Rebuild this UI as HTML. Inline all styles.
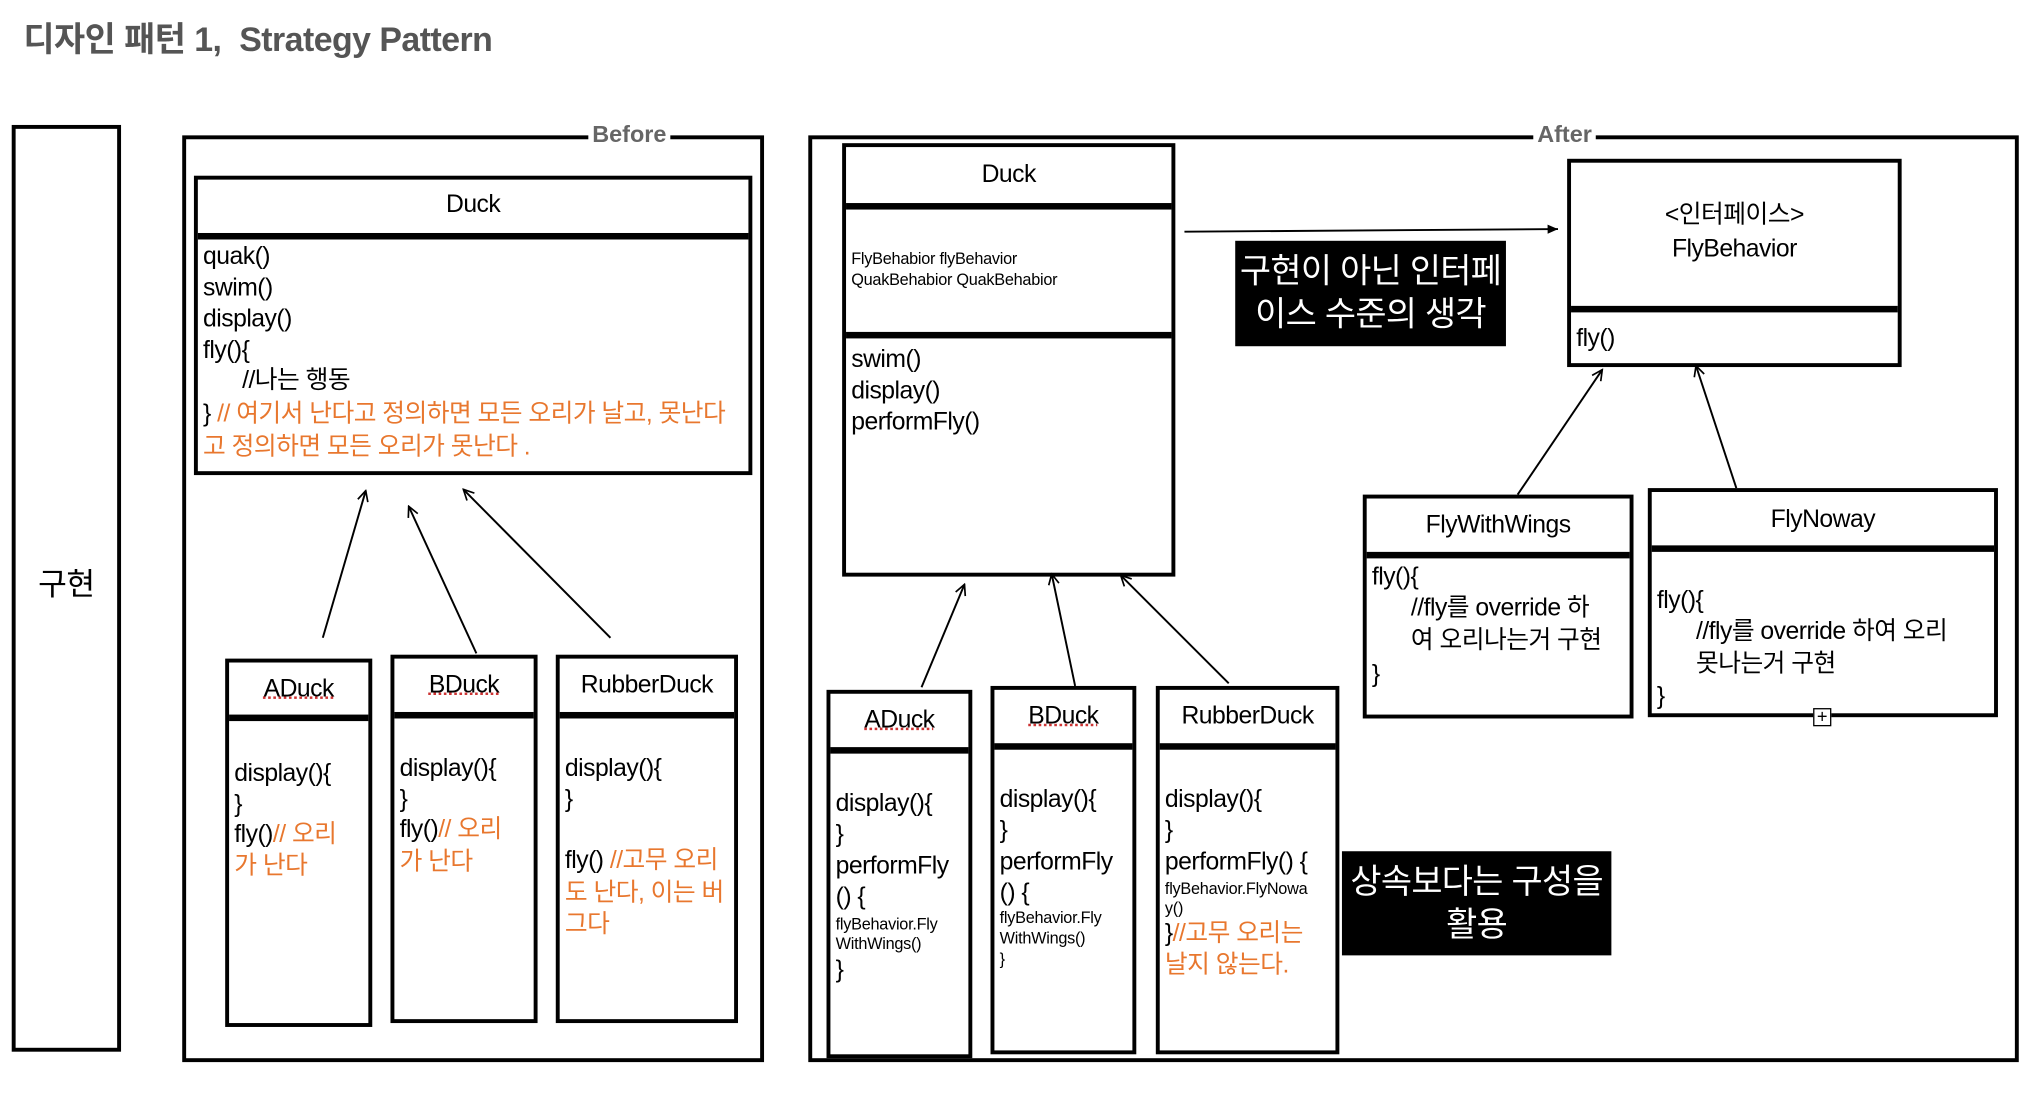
<!DOCTYPE html>
<html><head><meta charset="utf-8"><style>
html,body{margin:0;padding:0;background:#fff;width:2038px;height:1118px;overflow:hidden}
#w{position:absolute;left:0;top:0;width:1566px;height:859px;transform:scale(1.3016);transform-origin:0 0;font-family:"Liberation Sans","Noto Sans CJK KR",sans-serif;color:#000}
.b{position:absolute;border:3px solid #000;box-sizing:border-box}
.h{position:absolute;left:0;right:0;height:5px;background:#000}
.t{position:absolute;line-height:24px;font-size:19px;white-space:nowrap;letter-spacing:-0.4px}
.s{font-size:12.5px;line-height:15px;letter-spacing:-0.2px}
.c{text-align:center}
.o{color:#e8772e}
.lbl{position:absolute;background:#fff;color:#666;font-weight:bold;font-size:18px;line-height:22px;padding:0 3px}
.blk{position:absolute;background:#000;color:#fff;font-size:26px;line-height:33px;text-align:center;letter-spacing:-0.5px}
</style></head><body><div id="w">
<div class="t" style="left:18px;top:15px;font-size:26px;line-height:30px;font-weight:bold;color:#555">디자인 패턴 1,&nbsp; Strategy Pattern</div>

<div class="b" style="left:9px;top:96px;width:84px;height:712px"></div>
<div class="t" style="left:9px;width:84px;top:436px;font-size:24px;line-height:28px;text-align:center">구현</div>

<!-- Before -->
<div class="b" style="left:140px;top:104px;width:447px;height:712px"></div>
<div class="lbl" style="left:452px;top:92px">Before</div>
<div class="b" style="left:149px;top:135px;width:429px;height:230px"><div class="h" style="top:41px"></div></div>
<div class="t c" style="left:149px;width:429px;top:146px">Duck</div>
<div class="t" style="left:156px;top:186px">quak()</div>
<div class="t" style="left:156px;top:210px">swim()</div>
<div class="t" style="left:156px;top:234px">display()</div>
<div class="t" style="left:156px;top:258px">fly(){</div>
<div class="t" style="left:186px;top:281px">//나는 행동</div>
<div class="t" style="left:156px;top:307px">} <span class="o">// 여기서 난다고 정의하면 모든 오리가 날고, 못난다</span></div>
<div class="t o" style="left:156px;top:332px">고 정의하면 모든 오리가 못난다 .</div>

<div class="b" style="left:173px;top:506px;width:113px;height:283px"><div class="h" style="top:40px"></div></div>
<div class="t c" style="left:173px;width:113px;top:518px;text-decoration:underline dotted #c33">ADuck</div>
<div class="t" style="left:180px;top:583px">display(){</div>
<div class="t" style="left:180px;top:607px">}</div>
<div class="t" style="left:180px;top:630px">fly()<span class="o">// 오리</span></div>
<div class="t o" style="left:180px;top:654px">가 난다</div>

<div class="b" style="left:300px;top:503px;width:113px;height:283px"><div class="h" style="top:41px"></div></div>
<div class="t c" style="left:300px;width:113px;top:515px;text-decoration:underline dotted #c33">BDuck</div>
<div class="t" style="left:307px;top:579px">display(){</div>
<div class="t" style="left:307px;top:603px">}</div>
<div class="t" style="left:307px;top:626px">fly()<span class="o">// 오리</span></div>
<div class="t o" style="left:307px;top:651px">가 난다</div>

<div class="b" style="left:427px;top:503px;width:140px;height:283px"><div class="h" style="top:41px"></div></div>
<div class="t c" style="left:427px;width:140px;top:515px">RubberDuck</div>
<div class="t" style="left:434px;top:579px">display(){</div>
<div class="t" style="left:434px;top:603px">}</div>
<div class="t" style="left:434px;top:650px">fly() <span class="o">//고무 오리</span></div>
<div class="t o" style="left:434px;top:675px">도 난다, 이는 버</div>
<div class="t o" style="left:434px;top:699px">그다</div>

<!-- After -->
<div class="b" style="left:621px;top:104px;width:930px;height:712px"></div>
<div class="lbl" style="left:1178px;top:92px">After</div>
<div class="b" style="left:647px;top:110px;width:256px;height:333px"><div class="h" style="top:43px"></div><div class="h" style="top:142px"></div></div>
<div class="t c" style="left:647px;width:256px;top:123px">Duck</div>
<div class="t s" style="left:654px;top:192px">FlyBehabior flyBehavior</div>
<div class="t s" style="left:654px;top:208px">QuakBehabior QuakBehabior</div>
<div class="t" style="left:654px;top:265px">swim()</div>
<div class="t" style="left:654px;top:289px">display()</div>
<div class="t" style="left:654px;top:313px">performFly()</div>
<div class="blk" style="left:949px;top:185px;width:208px;height:81px;padding-top:7px;box-sizing:border-box">구현이 아닌 인터페<br>이스 수준의 생각</div>

<div class="b" style="left:1204px;top:122px;width:257px;height:160px"><div class="h" style="top:110px"></div></div>
<div class="t c" style="left:1204px;width:257px;top:154px">&lt;인터페이스&gt;</div>
<div class="t c" style="left:1204px;width:257px;top:180px">FlyBehavior</div>
<div class="t" style="left:1211px;top:249px">fly()</div>

<div class="b" style="left:1047px;top:380px;width:208px;height:172px"><div class="h" style="top:41px"></div></div>
<div class="t c" style="left:1047px;width:208px;top:392px">FlyWithWings</div>
<div class="t" style="left:1054px;top:432px">fly(){</div>
<div class="t" style="left:1084px;top:456px">//fly를 override 하</div>
<div class="t" style="left:1084px;top:481px">여 오리나는거 구현</div>
<div class="t" style="left:1054px;top:507px">}</div>

<div class="b" style="left:1266px;top:375px;width:269px;height:176px"><div class="h" style="top:41px"></div></div>
<div class="t c" style="left:1266px;width:269px;top:388px">FlyNoway</div>
<div class="t" style="left:1273px;top:450px">fly(){</div>
<div class="t" style="left:1303px;top:474px">//fly를 override 하여 오리</div>
<div class="t" style="left:1303px;top:499px">못나는거 구현</div>
<div class="t" style="left:1273px;top:524px">}</div>
<div style="position:absolute;left:1393px;top:544px;width:14px;height:14px;border:1px solid #000;background:#fff;box-sizing:border-box;font-size:14px;line-height:11px;text-align:center">+</div>

<div class="b" style="left:635px;top:530px;width:112px;height:283px"><div class="h" style="top:41px"></div></div>
<div class="t c" style="left:635px;width:112px;top:542px;text-decoration:underline dotted #c33">ADuck</div>
<div class="t" style="left:642px;top:606px">display(){</div>
<div class="t" style="left:642px;top:630px">}</div>
<div class="t" style="left:642px;top:654px">performFly</div>
<div class="t" style="left:642px;top:678px">() {</div>
<div class="t s" style="left:642px;top:703px">flyBehavior.Fly</div>
<div class="t s" style="left:642px;top:718px">WithWings()</div>
<div class="t" style="left:642px;top:734px">}</div>

<div class="b" style="left:761px;top:527px;width:112px;height:283px"><div class="h" style="top:41px"></div></div>
<div class="t c" style="left:761px;width:112px;top:539px;text-decoration:underline dotted #c33">BDuck</div>
<div class="t" style="left:768px;top:603px">display(){</div>
<div class="t" style="left:768px;top:627px">}</div>
<div class="t" style="left:768px;top:651px">performFly</div>
<div class="t" style="left:768px;top:675px">() {</div>
<div class="t s" style="left:768px;top:698px">flyBehavior.Fly</div>
<div class="t s" style="left:768px;top:714px">WithWings()</div>
<div class="t s" style="left:768px;top:730px">}</div>

<div class="b" style="left:888px;top:527px;width:141px;height:283px"><div class="h" style="top:41px"></div></div>
<div class="t c" style="left:888px;width:141px;top:539px">RubberDuck</div>
<div class="t" style="left:895px;top:603px">display(){</div>
<div class="t" style="left:895px;top:627px">}</div>
<div class="t" style="left:895px;top:651px">performFly() {</div>
<div class="t s" style="left:895px;top:676px">flyBehavior.FlyNowa</div>
<div class="t s" style="left:895px;top:691px">y()</div>
<div class="t" style="left:895px;top:706px">}<span class="o">//고무 오리는</span></div>
<div class="t o" style="left:895px;top:730px">날지 않는다.</div>

<div class="blk" style="left:1031px;top:654px;width:207px;height:80px;padding-top:7px;box-sizing:border-box">상속보다는 구성을<br>활용</div>

<svg style="position:absolute;left:0;top:0" width="1566" height="859" viewBox="0 0 1566 859">
<defs><marker id="a" markerWidth="10" markerHeight="10" refX="9" refY="5" orient="auto" markerUnits="userSpaceOnUse"><path d="M1 1 L9 5 L1 9" fill="none" stroke="#000" stroke-width="1.3"/></marker>
<marker id="f" markerWidth="10" markerHeight="10" refX="9" refY="5" orient="auto" markerUnits="userSpaceOnUse"><path d="M1 1.5 L9 5 L1 8.5 Z" fill="#000"/></marker></defs>
<g stroke="#000" stroke-width="1.5" fill="none">
<line x1="248" y1="490" x2="281" y2="377" marker-end="url(#a)"/>
<line x1="366" y1="502" x2="314" y2="389" marker-end="url(#a)"/>
<line x1="469" y1="490" x2="356" y2="376" marker-end="url(#a)"/>
<line x1="708" y1="528" x2="741" y2="449" marker-end="url(#a)"/>
<line x1="826" y1="527" x2="808" y2="441" marker-end="url(#a)"/>
<line x1="944" y1="525" x2="861" y2="442" marker-end="url(#a)"/>
<line x1="1166" y1="380" x2="1231" y2="284" marker-end="url(#a)"/>
<line x1="1334" y1="375" x2="1303" y2="281" marker-end="url(#a)"/>
<line x1="910" y1="178" x2="1197" y2="176" marker-end="url(#f)"/>
</g></svg>
</div></body></html>
